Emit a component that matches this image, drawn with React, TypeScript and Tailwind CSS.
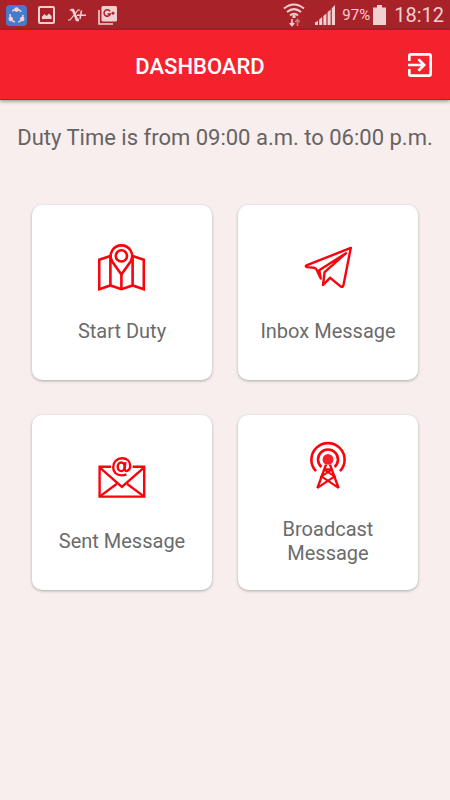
import type { ReactNode } from "react";
import { MdExitToApp } from "react-icons/md";

const iconProps = {
  viewBox: "0 0 48 48",
  className: "size-12 text-[#f8040c]",
  fill: "none",
  stroke: "currentColor",
  strokeWidth: 2.6,
  "aria-hidden": true,
} as const;

function MapIcon() {
  return (
    <svg {...iconProps}>
      <circle cx="23.4" cy="12.9" r="5.6" />
      <path d="M23.4 31.4 14 18.2A10.7 10.7 0 1 1 32.8 18.2Z" />
      <path d="M12.4 13 1.2 16.8V46.2L12.4 42.4 23.4 46.2 34.6 42.4 45.8 46.2V16.8L34.6 13" />
      <path d="M12.4 13V42.4M34.6 13V42.4M23.4 31V46" />
    </svg>
  );
}

function PlaneIcon() {
  return (
    <svg {...iconProps} strokeWidth={2.4} strokeLinejoin="round" strokeLinecap="round">
      <path d="M46.8 4.9 2.4 22.4Q1 23.4 3 24.1L10 24.7Q12.4 25.4 13.2 28L16.8 35.6 15.2 27.2 42 10.2 20.6 29.2 19 42 26 34.8 36.6 43.4Q38.8 44.6 39.4 42.4Z" />
    </svg>
  );
}

function MailIcon() {
  return (
    <svg {...iconProps} strokeWidth={2.4}>
      <path d="M13 13.8H1.6V43.6H46.2V13.8H34.6" />
      <path d="M1.6 14.4 23.9 33.8 46.2 14.4M1.6 43.6 18.6 31M46.2 43.6 29.2 31" />
      <ellipse cx="23.2" cy="13.8" rx="3.5" ry="4.3" />
      <path d="M27.4 9.2 26.6 15.6Q26.7 18.2 28.8 18Q32.2 17 32.2 12.8C32.2 8.2 28.8 5.2 24.2 5.2C18.8 5.2 15.2 9 15.2 14.2C15.2 19.4 18.6 22.4 23.6 22.4Q26.2 22.4 28.4 21.4" />
    </svg>
  );
}

function AntennaIcon() {
  return (
    <svg {...iconProps}>
      <circle cx="24" cy="18.4" r="5.4" fill="#f5222d" stroke="none" />
      <path d="M17.4 26A10 10 0 1 1 30.6 26" />
      <path d="M12 30.2A16.6 16.6 0 1 1 36 30.2" />
      <g strokeWidth="2">
        <path d="M22 23.6 13.4 47.2M26 23.6 34.6 47.2" strokeWidth="2.4" />
        <path d="M20.4 28.2H27.6M20.4 28.6 30.6 35.4 13.4 46.8M27.6 28.6 17.4 35.4 34.6 46.8" />
      </g>
    </svg>
  );
}

function StatusBar() {
  return (
    <div className="flex h-[30px] items-center justify-between bg-[#a82329] px-[6px] text-[#f2d0d2]">
      <div className="flex items-center gap-[11px]">
        <svg viewBox="0 0 21 21" className="size-[21px]" fill="none" aria-hidden>
          <rect width="21" height="21" rx="4" fill="#457bc9" />
          <circle cx="10.5" cy="10.8" r="6.4" stroke="#dfd3e2" strokeWidth="1.6" strokeDasharray="10 3.4" strokeDashoffset="2" />
          <circle cx="10.5" cy="4.6" r="2.3" fill="#f2d0d2" />
          <circle cx="4.8" cy="14" r="2.3" fill="#f2d0d2" />
          <circle cx="16.2" cy="14" r="2.3" fill="#f2d0d2" />
        </svg>
        <svg viewBox="0 0 18 18" className="size-[18px]" aria-hidden>
          <rect x="1" y="1" width="15" height="16" rx="1" fill="none" stroke="currentColor" strokeWidth="2" />
          <path d="M4 13V10.5L6.5 8 8.5 10 11 7.5 13.5 10V13Z" fill="currentColor" />
        </svg>
        <svg viewBox="0 0 20 14" className="h-[14px] w-[20px]" fill="none" stroke="currentColor" aria-hidden>
          <path d="M4 2H6L10 12H12" strokeWidth="2.6" />
          <path d="M13 2H11L3 12H1M2.5 2H7M8.5 12H12" strokeWidth="1.2" />
          <path d="M10 7.2H19M14.5 2.5 13 11" strokeWidth="1.5" />
        </svg>
        <svg viewBox="0 0 19 19" className="size-[19px]" aria-hidden>
          <path d="M1 4V18H15" fill="none" stroke="currentColor" strokeWidth="1.6" />
          <rect x="3.5" width="15.5" height="15.5" rx="1.5" fill="currentColor" />
          <path d="M12 5.4A3.2 3.2 0 1 0 12.3 8H9.5M13.5 7.2H16.5M15 5.7V8.7" fill="none" stroke="#a82329" strokeWidth="1.5" />
        </svg>
      </div>
      <div className="flex items-center">
        <svg viewBox="0 0 22 24" className="h-6 w-[22px]" fill="none" stroke="currentColor" strokeWidth="2" aria-hidden>
          <path d="M1 5.5Q11-2.5 21 5.5M4 9Q11 3.2 18 9M7 12.4Q11 9 15 12.4" />
          <path d="M11 12V15" strokeWidth="3" />
          <path d="M9 16V22M6.8 20 9 22.6 11.2 20" strokeWidth="1.6" />
          <path d="M14.5 23V17M12.3 19 14.5 16.5 16.7 19" stroke="#d5797d" strokeWidth="1.6" />
        </svg>
        <svg viewBox="0 0 20 20" className="ml-[10px] size-5" fill="currentColor" aria-hidden>
          <path d="M0 20V17.5L3 15.8V20ZM4.2 20V14.5L7.2 12V20ZM8.4 20V11L11.4 8.4V20ZM12.6 20V7.2L15.6 4.4V20ZM16.8 20V3.2L20 0V20Z" />
        </svg>
        <span className="ml-[7px] text-[15px]">97%</span>
        <svg viewBox="0 0 13 20" className="ml-[3px] h-5 w-[13px]" fill="currentColor" aria-hidden>
          <path d="M4 0H9V2.5H13V20H0V2.5H4Z" />
        </svg>
        <time className="ml-[8px] text-xl">18:12</time>
      </div>
    </div>
  );
}

function Tile({ icon, label }: { icon: ReactNode; label: string }) {
  return (
    <button
      type="button"
      className="flex min-h-[175px] flex-col items-center justify-center gap-7 rounded-[10px] bg-white px-4 text-xl leading-6 text-[#6b6b6b] shadow-[0_1px_3px_rgba(0,0,0,0.3)]"
    >
      {icon}
      <span>{label}</span>
    </button>
  );
}

export default function App() {
  return (
    <div className="min-h-screen bg-[#f8eeee] font-[Roboto,sans-serif]">
      <StatusBar />
      <header className="flex h-[70px] items-center border-b border-[#e30a12] bg-[#f5222d] pr-[10px] text-white shadow-[0_1px_4px_rgba(0,0,0,0.45)]">
        <h1 className="flex-1 pt-[3px] text-center text-[22px] font-medium">DASHBOARD</h1>
        <button type="button" aria-label="Log out" className="flex size-10 items-center justify-center">
          <MdExitToApp className="size-8" />
        </button>
      </header>
      <main>
        <p className="pt-6 text-center text-[22px] leading-7 text-[#666363]">
          Duty Time is from 09:00 a.m. to 06:00 p.m.
        </p>
        <div className="grid grid-cols-2 gap-x-[26px] gap-y-[35px] px-8 pt-[53px] pb-8">
          <Tile icon={<MapIcon />} label="Start Duty" />
          <Tile icon={<PlaneIcon />} label="Inbox Message" />
          <Tile icon={<MailIcon />} label="Sent Message" />
          <Tile icon={<AntennaIcon />} label="Broadcast Message" />
        </div>
      </main>
    </div>
  );
}
